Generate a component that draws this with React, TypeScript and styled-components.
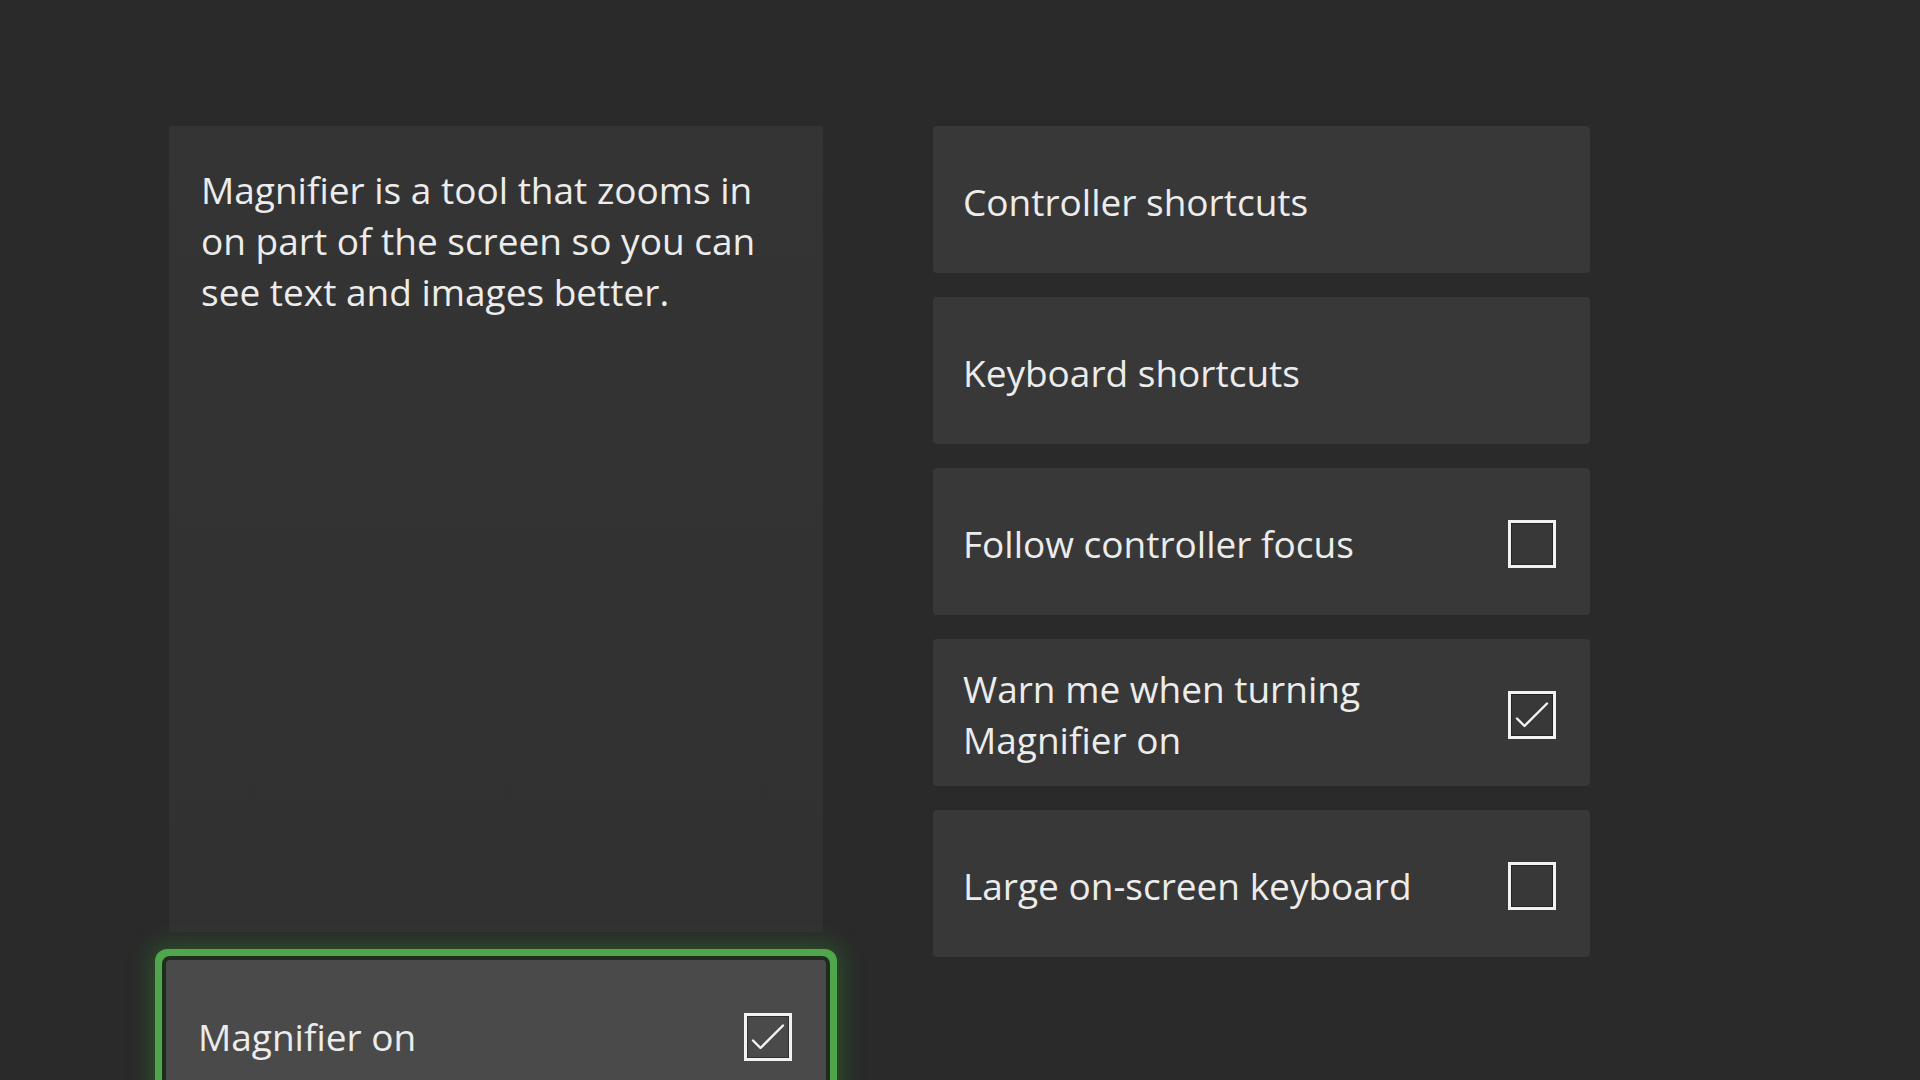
import React from "react";
import styled, { createGlobalStyle } from "styled-components";

const GlobalStyle = createGlobalStyle`
  html, body {
    margin: 0;
    padding: 0;
    background: #2a2a2a;
    overflow: hidden;
  }
  * { box-sizing: border-box; }
`;

const Screen = styled.div`
  width: 1920px;
  height: 1080px;
  overflow: hidden;
  background: #2a2a2a;
  font-family: "Open Sans", "Noto Sans", sans-serif;
  color: #ececec;
  display: grid;
  grid-template-columns: 654px 657px;
  column-gap: 110px;
  align-items: start;
  padding: 126px 0 0 169px;
`;

const LeftColumn = styled.div`
  display: flex;
  flex-direction: column;
  gap: 28px;
`;

const DescriptionPanel = styled.div`
  height: 806px;
  border-radius: 4px;
  background: linear-gradient(180deg, #343434 0%, #313131 100%);
  padding: 38px 36px 0 32px;
  font-size: 37px;
  line-height: 51px;
`;

const RightColumn = styled.div`
  display: flex;
  flex-direction: column;
  gap: 24px;
`;

const Tile = styled.div<{ $focused?: boolean }>`
  height: ${(p) => (p.$focused ? "149px" : "147px")};
  border-radius: 4px;
  background: ${(p) => (p.$focused ? "#4a4a4a" : "#383838")};
  display: flex;
  align-items: center;
  justify-content: space-between;
  padding: 0 34px 0 ${(p) => (p.$focused ? "32px" : "30px")};
  gap: 24px;
  ${(p) =>
    p.$focused &&
    `
    margin: 0 -3px;
    box-shadow:
      0 0 0 4px #1f2c1f,
      0 0 0 11px #4fa64b,
      0 0 24px 14px rgba(50, 150, 50, 0.4);
  `}
`;

const Label = styled.span`
  font-size: 37px;
  line-height: 51px;
  max-width: 470px;
  padding-top: 3px;
`;

const CheckBox = styled.div`
  flex: none;
  width: 48px;
  height: 48px;
  margin-top: 4px;
  border: 3px solid #f2f2f2;
  box-shadow: inset 0 0 0 1px rgba(0, 0, 0, 0.35);
  display: flex;
  align-items: center;
  justify-content: center;
`;

const Check = ({ checked }: { checked: boolean }) => (
  <CheckBox>
    {checked && (
      <svg width="42" height="42" viewBox="0 0 42 42">
        <path
          d="M6 24.5 L13.5 32 L36 9.5"
          fill="none"
          stroke="#f2f2f2"
          strokeWidth="2.4"
          strokeLinecap="round"
          strokeLinejoin="round"
        />
      </svg>
    )}
  </CheckBox>
);

type Item = { label: string; checkbox?: boolean; checked?: boolean };

const items: Item[] = [
  { label: "Controller shortcuts" },
  { label: "Keyboard shortcuts" },
  { label: "Follow controller focus", checkbox: true, checked: false },
  { label: "Warn me when turning Magnifier on", checkbox: true, checked: true },
  { label: "Large on-screen keyboard", checkbox: true, checked: false },
];

export default function App() {
  return (
    <>
      <GlobalStyle />
      <Screen>
        <LeftColumn>
          <DescriptionPanel>
            Magnifier is a tool that zooms in on part of the screen so you can
            see text and images better.
          </DescriptionPanel>
          <Tile $focused>
            <Label>Magnifier on</Label>
            <Check checked />
          </Tile>
        </LeftColumn>
        <RightColumn>
          {items.map((it) => (
            <Tile key={it.label}>
              <Label>{it.label}</Label>
              {it.checkbox && <Check checked={!!it.checked} />}
            </Tile>
          ))}
        </RightColumn>
      </Screen>
    </>
  );
}
